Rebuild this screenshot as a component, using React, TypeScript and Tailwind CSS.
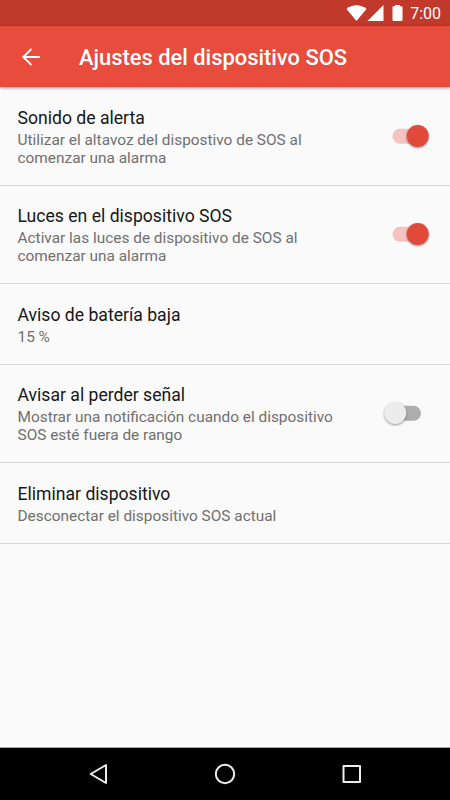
const settings = [
  { title: "Sonido de alerta", lines: ["Utilizar el altavoz del dispostivo de SOS al", "comenzar una alarma"], on: true, size: "h-[99px] pt-[19px]" },
  { title: "Luces en el dispositivo SOS", lines: ["Activar las luces de dispositivo de SOS al", "comenzar una alarma"], on: true, size: "h-[98px] pt-[18px]" },
  { title: "Aviso de batería baja", lines: ["15 %"], size: "h-[81px] pt-[19px]" },
  { title: "Avisar al perder señal", lines: ["Mostrar una notificación cuando el dispositivo", "SOS esté fuera de rango"], on: false, size: "h-[98px] pt-[18px]" },
  { title: "Eliminar dispositivo", lines: ["Desconectar el dispositivo SOS actual"], size: "h-[81px] pt-[19px]" },
];

function Toggle({ on }: { on: boolean }) {
  return (
    <svg width="54" height="32" viewBox="0 0 54 32" className="mt-[14px] shrink-0">
      <rect x={on ? 12.5 : 11} y="8.8" width="30" height="15" rx="7.5" fill={on ? "#f5c3c0" : "#aeaeae"} />
      <circle
        cx={on ? 37.7 : 15.3}
        cy="16"
        r="11"
        fill={on ? "#e1493b" : "#ececec"}
        className="drop-shadow-[0_1px_1px_rgba(0,0,0,0.4)]"
      />
    </svg>
  );
}

export default function App() {
  return (
    <div className="flex h-[800px] w-[450px] flex-col overflow-hidden bg-[#fafafa] font-['Roboto',sans-serif]">
      <div className="flex h-[26px] items-center justify-end gap-[7px] bg-[#c0392b] pr-[9px] text-white">
        <svg width="57" height="26" viewBox="0 0 57 26" fill="currentColor">
          <path d="M0.5 9C6 4 15 4 20.5 9L10.5 21Z" />
          <path d="M21.5 21L37.5 5V21Z" />
          <path d="M46.5 7.3Q46.5 6.3 47.5 6.3H49V5H54V6.3H55.5Q56.5 6.3 56.5 7.3V20Q56.5 21 55.5 21H47.5Q46.5 21 46.5 20Z" />
        </svg>
        <span className="pt-[2px] text-base">7:00</span>
      </div>

      <header className="z-10 flex h-[61px] items-center bg-[#e74c3c] pl-[21px] text-white shadow-[0_1px_3px_rgba(0,0,0,0.4)]">
        <svg width="20" height="20" viewBox="0 0 20 20" fill="none" stroke="currentColor" strokeWidth="2">
          <path d="M18.8 10H3M10.5 1.9L2.4 10L10.5 18.1" />
        </svg>
        <h1 className="ml-[38px] pt-1 text-[21.9px] font-medium">Ajustes del dispositivo SOS</h1>
      </header>

      <main className="flex-1">
        {settings.map((item) => (
          <section key={item.title} className={`flex justify-between border-b border-[#d5d5d5] pl-[17.5px] pr-4 ${item.size}`}>
            <div>
              <h2 className="mb-[2px] text-[17.6px] leading-6 text-[#161616]">{item.title}</h2>
              {item.lines.map((line) => (
                <p key={line} className="text-[15.4px] leading-[17.7px] text-[#6f6f6f]">{line}</p>
              ))}
            </div>
            {item.on !== undefined && <Toggle on={item.on} />}
          </section>
        ))}
      </main>

      <nav className="h-[53px] border-t border-[#aaa] bg-black text-[#eee]">
        <svg width="450" height="52" viewBox="0 0 450 52" fill="none" stroke="currentColor" strokeWidth="2" strokeLinejoin="round">
          <path d="M106 17V35L90.7 26Z" />
          <circle cx="225" cy="26" r="9.2" />
          <rect x="343.5" y="18" width="16.5" height="16" />
        </svg>
      </nav>
    </div>
  );
}
